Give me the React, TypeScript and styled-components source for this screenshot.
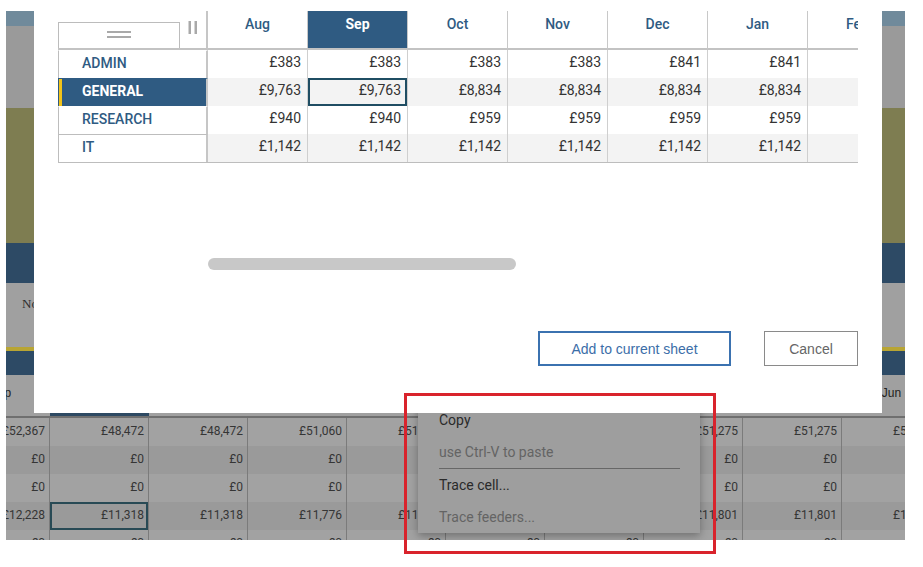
import styled, { createGlobalStyle } from 'styled-components';

const GlobalStyle = createGlobalStyle`
  html, body {
    margin: 0;
    padding: 0;
    background: #fff;
  }

  body {
    font-family: Roboto, 'Liberation Sans', sans-serif;
  }
`;

const months = ['Aug', 'Sep', 'Oct', 'Nov', 'Dec', 'Jan', 'Feb'];

const rows = [
  { name: 'ADMIN', values: ['£383', '£383', '£383', '£383', '£841', '£841', ''] },
  { name: 'GENERAL', values: ['£9,763', '£9,763', '£8,834', '£8,834', '£8,834', '£8,834', ''] },
  { name: 'RESEARCH', values: ['£940', '£940', '£959', '£959', '£959', '£959', ''] },
  { name: 'IT', values: ['£1,142', '£1,142', '£1,142', '£1,142', '£1,142', '£1,142', ''] },
];

// the sheet behind the dialog (already dimmed by the scrim)
const backMonths = ['Sep', 'Oct', 'Nov', 'Dec', 'Jan', 'Feb', 'Mar', 'Apr', 'May', 'Jun'];

const backRows = [
  ['£52,367', '£48,472', '£48,472', '£51,060', '£51,060', '£51,060', '£51,275', '£51,275', '£51,275', '£51,275'],
  ['£0', '£0', '£0', '£0', '£0', '£0', '£0', '£0', '£0', '£0'],
  ['£0', '£0', '£0', '£0', '£0', '£0', '£0', '£0', '£0', '£0'],
  ['£12,228', '£11,318', '£11,318', '£11,776', '£11,776', '£11,776', '£11,801', '£11,801', '£11,801', '£11,801'],
  ['£0', '£0', '£0', '£0', '£0', '£0', '£0', '£0', '£0', '£0'],
];

const App = () => {
  return (
    <>
      <GlobalStyle />
      <Screen>
        <Backdrop>
          <Band $h={15} $bg='#708a9b' />
          <Band $h={82} $bg='#9a9a9a' />
          <Band $h={135} $bg='#7e7d51' />
          <Band $h={40} $bg='#2d4a65' />
          <Band $h={64} $bg='#a0a0a0'>
            <BandLabel>Notes</BandLabel>
          </Band>
          <Band $h={4} $bg='#b8a534' />
          <Band $h={24} $bg='#2d4a65' />

          <BackGrid>
            {backMonths.map((m, i) => (
              <BackHead key={m} $active={i === 1}>
                {m}
              </BackHead>
            ))}
            {backRows.map((r, ri) =>
              r.map((v, ci) => (
                <BackCell key={`${ri}-${ci}`} $alt={ri % 2 === 1} $selected={ri === 3 && ci === 1}>
                  {v}
                </BackCell>
              ))
            )}
          </BackGrid>

          <ContextMenu>
            <MenuItem>Copy</MenuItem>
            <MenuItem $disabled>use Ctrl-V to paste</MenuItem>
            <MenuDivider />
            <MenuItem>Trace cell...</MenuItem>
            <MenuItem $disabled>Trace feeders...</MenuItem>
          </ContextMenu>
        </Backdrop>

        <Dialog>
          <Sheet>
            <Corner>
              <SortBox>
                <svg width='24' height='8' viewBox='0 0 24 8'>
                  <rect x='0' y='0' width='24' height='2' fill='#a9a9a9' />
                  <rect x='0' y='5' width='24' height='2' fill='#a9a9a9' />
                </svg>
              </SortBox>
              <Handle>
                <svg width='10' height='13' viewBox='0 0 10 13'>
                  <rect x='0.5' y='0' width='2.5' height='13' fill='#a9a9a9' />
                  <rect x='6.5' y='0' width='2.5' height='13' fill='#a9a9a9' />
                </svg>
              </Handle>
            </Corner>
            {months.map((m) => (
              <MonthHead key={m} $active={m === 'Sep'}>
                {m}
              </MonthHead>
            ))}

            {rows.map((row, ri) => (
              <RowFragment key={row.name}>
                <RowLabel $active={row.name === 'GENERAL'} $ruled={row.name === 'IT'}>
                  {row.name}
                </RowLabel>
                {row.values.map((v, ci) => (
                  <ValueCell key={ci} $alt={ri % 2 === 1} $selected={ri === 1 && ci === 1}>
                    {v}
                  </ValueCell>
                ))}
              </RowFragment>
            ))}
          </Sheet>

          <ScrollTrack>
            <ScrollThumb />
          </ScrollTrack>

          <Actions>
            <PrimaryButton>Add to current sheet</PrimaryButton>
            <SecondaryButton>Cancel</SecondaryButton>
          </Actions>
        </Dialog>

        <Highlight />
      </Screen>
    </>
  );
};

const RowFragment = styled.div`
  display: contents;
`;

const Screen = styled.div`
  position: relative;
  width: 923px;
  height: 567px;
  overflow: hidden;
  background: #fff;
`;

const Backdrop = styled.div`
  position: relative;
  display: flex;
  flex-direction: column;
  margin: 11px 0 0 6px;
  width: 899px;
  height: 529px;
  overflow: hidden;
  background: #9c9c9c;
`;

const Band = styled.div<{ $h: number; $bg: string }>`
  flex: none;
  height: ${(p) => p.$h}px;
  background: ${(p) => p.$bg};
`;

const BandLabel = styled.div`
  padding: 13px 0 0 16px;
  font-family: 'Liberation Serif', serif;
  font-size: 13px;
  color: #2e2e2e;
`;

const BackGrid = styled.div`
  display: grid;
  grid-template-columns: repeat(10, 99px);
  grid-template-rows: 43px;
  grid-auto-rows: 28px;
  margin-left: -55px;
  width: 990px;
`;

const BackHead = styled.div<{ $active?: boolean }>`
  display: flex;
  align-items: center;
  justify-content: center;
  padding-bottom: 6px;
  box-sizing: border-box;
  background: #a0a0a0;
  border-bottom: 2px solid #6f6f6f;
  box-shadow: ${(p) => (p.$active ? 'inset 0 -5px 0 #2e4a63' : 'none')};
  font-family: 'Liberation Sans', Arial, sans-serif;
  font-size: 12px;
  color: #222;
`;

const BackCell = styled.div<{ $alt?: boolean; $selected?: boolean }>`
  box-sizing: border-box;
  padding-right: 4px;
  text-align: right;
  line-height: 27px;
  font-size: 12px;
  color: #353535;
  background: ${(p) => (p.$alt ? '#9a9a9a' : '#a2a2a2')};
  border-right: 1px solid #7b7b7b;
  box-shadow: ${(p) => (p.$selected ? 'inset 0 0 0 2px #284a55' : 'none')};
`;

const ContextMenu = styled.div`
  position: absolute;
  left: 412px;
  top: 393px;
  width: 282px;
  background: #9e9e9e;
  box-shadow: 0 3px 8px rgba(0, 0, 0, 0.3);
`;

const MenuItem = styled.div<{ $disabled?: boolean }>`
  height: 32px;
  line-height: 32px;
  padding: 0 21px;
  font-size: 14px;
  color: ${(p) => (p.$disabled ? '#646464' : '#2a2a2a')};
`;

const MenuDivider = styled.div`
  height: 1px;
  margin: 0 20px 0 21px;
  background: #676767;
`;

const Dialog = styled.div`
  position: absolute;
  left: 34px;
  top: 0;
  display: flex;
  flex-direction: column;
  box-sizing: border-box;
  width: 848px;
  height: 413px;
  padding: 11px 24px 0;
  background: #fff;
`;

const Sheet = styled.div`
  display: grid;
  grid-template-columns: 150px repeat(7, 100px);
  grid-template-rows: 39px repeat(4, 28px);
  width: 800px;
  overflow: hidden;
  border-bottom: 1px solid #bdbdbd;
`;

const Corner = styled.div`
  display: flex;
  box-sizing: border-box;
  border-right: 2px solid #c6c6c6;
  border-bottom: 2px solid #c3c3c3;
`;

const SortBox = styled.div`
  display: flex;
  align-items: center;
  justify-content: center;
  box-sizing: border-box;
  width: 122px;
  margin-top: 11px;
  padding-bottom: 1px;
  border: 1px solid #bcbcbc;
  border-bottom: none;
`;

const Handle = styled.div`
  display: flex;
  justify-content: center;
  flex: 1;
  padding-top: 10px;
`;

const MonthHead = styled.div<{ $active?: boolean }>`
  box-sizing: border-box;
  padding-top: 5px;
  text-align: center;
  font-size: 14px;
  line-height: 16px;
  font-weight: ${(p) => (p.$active ? 700 : 500)};
  color: ${(p) => (p.$active ? '#fff' : '#2f5b82')};
  background: ${(p) => (p.$active ? '#2f5b82' : '#fff')};
  border-right: 1px solid #c8c8c8;
  border-bottom: 2px solid #c3c3c3;
  white-space: nowrap;
`;

const RowLabel = styled.div<{ $active?: boolean; $ruled?: boolean }>`
  box-sizing: border-box;
  padding-left: 23px;
  line-height: 24px;
  font-size: 14px;
  font-weight: ${(p) => (p.$active ? 700 : 500)};
  color: ${(p) => (p.$active ? '#fff' : '#2f5b82')};
  background: ${(p) => (p.$active ? '#2f5b82' : '#fff')};
  border-left: 1px solid ${(p) => (p.$active ? '#2f5b82' : '#bdbdbd')};
  border-right: 2px solid #c6c6c6;
  border-top: 1px solid ${(p) => (p.$ruled ? '#bdbdbd' : 'transparent')};
  box-shadow: ${(p) => (p.$active ? 'inset 3px 0 0 #f2c41a' : 'none')};
`;

const ValueCell = styled.div<{ $alt?: boolean; $selected?: boolean }>`
  box-sizing: border-box;
  padding-right: 6px;
  text-align: right;
  line-height: 25px;
  font-size: 14px;
  color: #333;
  background: ${(p) => (p.$alt ? '#f3f3f3' : '#fff')};
  border-right: 1px solid #cfcfcf;
  box-shadow: ${(p) => (p.$selected ? 'inset 0 0 0 2px #1f4d63' : 'none')};
`;

const ScrollTrack = styled.div`
  margin: 95px 0 0 150px;
  width: 650px;
`;

const ScrollThumb = styled.div`
  width: 308px;
  height: 12px;
  border-radius: 6px;
  background: #c8c8c8;
`;

const Actions = styled.div`
  display: flex;
  justify-content: flex-end;
  gap: 33px;
  margin-top: 61px;
`;

const PrimaryButton = styled.button`
  box-sizing: border-box;
  width: 193px;
  height: 35px;
  background: #fff;
  border: 2px solid #3b72b0;
  font-family: 'Liberation Sans', Arial, sans-serif;
  font-size: 14px;
  color: #3b6ea8;
`;

const SecondaryButton = styled.button`
  box-sizing: border-box;
  width: 94px;
  height: 35px;
  background: #fff;
  border: 1px solid #8a8a8a;
  font-family: 'Liberation Sans', Arial, sans-serif;
  font-size: 14px;
  color: #666;
`;

const Highlight = styled.div`
  position: absolute;
  left: 404px;
  top: 393px;
  box-sizing: border-box;
  width: 312px;
  height: 161px;
  border: 3px solid #d9232c;
  pointer-events: none;
`;

export default App;
